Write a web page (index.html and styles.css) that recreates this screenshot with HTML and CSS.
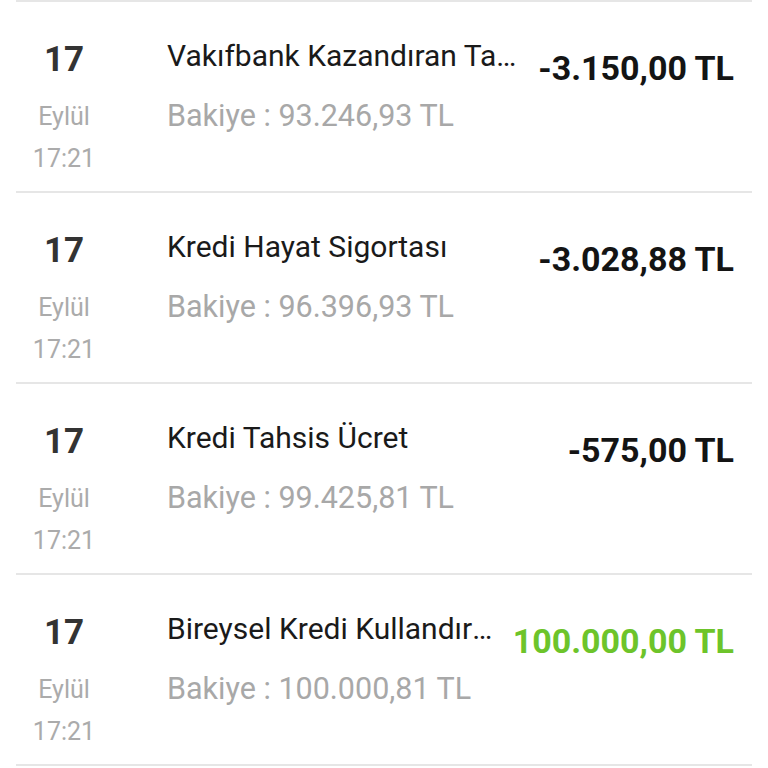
FILE: index.html
```html
<!DOCTYPE html>
<html lang="tr">
<head>
<meta charset="utf-8">
<title>Hesap Hareketleri</title>
<link rel="stylesheet" href="styles.css">
</head>
<body>
<ul class="list">
  <li class="row">
    <div class="date"><span class="day">17</span><span class="month">Eylül</span><span class="time">17:21</span></div>
    <div class="info"><span class="title">Vakıfbank Kazandıran Tarifeler Ücreti</span><span class="balance">Bakiye : 93.246,93 TL</span></div>
    <div class="amount">-3.150,00 TL</div>
  </li>
  <li class="row">
    <div class="date"><span class="day">17</span><span class="month">Eylül</span><span class="time">17:21</span></div>
    <div class="info"><span class="title">Kredi Hayat Sigortası</span><span class="balance">Bakiye : 96.396,93 TL</span></div>
    <div class="amount">-3.028,88 TL</div>
  </li>
  <li class="row">
    <div class="date"><span class="day">17</span><span class="month">Eylül</span><span class="time">17:21</span></div>
    <div class="info"><span class="title">Kredi Tahsis Ücret</span><span class="balance">Bakiye : 99.425,81 TL</span></div>
    <div class="amount">-575,00 TL</div>
  </li>
  <li class="row">
    <div class="date"><span class="day">17</span><span class="month">Eylül</span><span class="time">17:21</span></div>
    <div class="info"><span class="title">Bireysel Kredi Kullandırım</span><span class="balance">Bakiye : 100.000,81 TL</span></div>
    <div class="amount positive">100.000,00 TL</div>
  </li>
</ul>
</body>
</html>
```

FILE: styles.css
```css
html, body {
  margin: 0;
  padding: 0;
  background: #ffffff;
}

body {
  font-family: Roboto, "Liberation Sans", sans-serif;
  width: 768px;
  height: 768px;
  overflow: hidden;
}

.list {
  list-style: none;
  margin: 0 16px;
  padding: 0;
  border-top: 2px solid #e6e6e6;
}

.row {
  display: flex;
  align-items: flex-start;
  height: 189px;
  border-bottom: 2px solid #e6e6e6;
  padding: 0 18px 0 0;
}

.date {
  width: 96px;
  flex: none;
  display: flex;
  flex-direction: column;
  align-items: center;
  padding-top: 38px;
}

.day {
  font-size: 35px;
  line-height: 40px;
  font-weight: 700;
  color: #333333;
  margin-bottom: 16px;
}

.month, .time {
  font-size: 25px;
  line-height: 42px;
  color: #ababab;
}

.info {
  flex: 1;
  min-width: 0;
  display: flex;
  flex-direction: column;
  margin-left: 55px;
  padding-top: 24px;
}

.title {
  font-size: 30px;
  line-height: 60px;
  color: #1a1a1a;
  white-space: nowrap;
  overflow: hidden;
  text-overflow: ellipsis;
}

.balance {
  font-size: 30.5px;
  line-height: 60px;
  color: #a8a8a8;
  white-space: nowrap;
}

.amount {
  flex: none;
  margin-left: 20px;
  padding-top: 46px;
  font-size: 34px;
  line-height: 40px;
  font-weight: 700;
  color: #141414;
}

.amount.positive {
  color: #6dc42a;
}
```
